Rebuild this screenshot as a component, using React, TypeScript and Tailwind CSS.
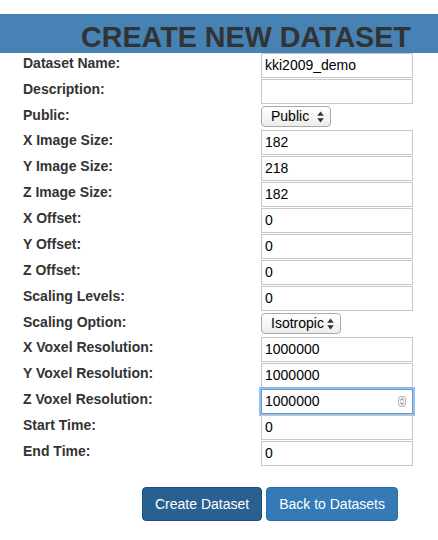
import React from "react";

type Row =
  | { label: string; kind: "input"; value: string; focused?: boolean }
  | { label: string; kind: "select"; value: string; width: number };

const rows: Row[] = [
  { label: "Dataset Name:", kind: "input", value: "kki2009_demo" },
  { label: "Description:", kind: "input", value: "" },
  { label: "Public:", kind: "select", value: "Public", width: 70 },
  { label: "X Image Size:", kind: "input", value: "182" },
  { label: "Y Image Size:", kind: "input", value: "218" },
  { label: "Z Image Size:", kind: "input", value: "182" },
  { label: "X Offset:", kind: "input", value: "0" },
  { label: "Y Offset:", kind: "input", value: "0" },
  { label: "Z Offset:", kind: "input", value: "0" },
  { label: "Scaling Levels:", kind: "input", value: "0" },
  { label: "Scaling Option:", kind: "select", value: "Isotropic", width: 80 },
  { label: "X Voxel Resolution:", kind: "input", value: "1000000" },
  { label: "Y Voxel Resolution:", kind: "input", value: "1000000" },
  { label: "Z Voxel Resolution:", kind: "input", value: "1000000", focused: true },
  { label: "Start Time:", kind: "input", value: "0" },
  { label: "End Time:", kind: "input", value: "0" },
];

function SelectArrows() {
  return (
    <svg width="7" height="12" viewBox="0 0 7 12" className="shrink-0">
      <path d="M3.5 0.5 L6.8 4.8 L0.2 4.8 Z" fill="#333" />
      <path d="M3.5 11.5 L6.8 7.2 L0.2 7.2 Z" fill="#333" />
    </svg>
  );
}

function Spinner() {
  return (
    <div className="absolute right-[6px] top-[6px] flex h-[11px] w-[8px] flex-col items-center justify-center gap-[1px] rounded-[3px] border border-[#b5b5b5] bg-[#f6f6f6]">
      <svg width="4" height="3" viewBox="0 0 4 3">
        <path d="M0.3 2.6 L2 0.5 L3.7 2.6" fill="none" stroke="#555" strokeWidth="0.8" />
      </svg>
      <svg width="4" height="3" viewBox="0 0 4 3">
        <path d="M0.3 0.4 L2 2.5 L3.7 0.4" fill="none" stroke="#555" strokeWidth="0.8" />
      </svg>
    </div>
  );
}

export default function App() {
  return (
    <div
      className="min-h-[540px] w-[438px] bg-white text-[#333]"
      style={{ fontFamily: '"Liberation Sans", Arial, Helvetica, sans-serif' }}
    >
      <div className="mt-[14px] h-[39px] bg-[#4682b4] pl-[81px] pt-[7px]">
        <h1 className="whitespace-nowrap text-[28.7px] font-bold leading-[32px] text-[#333]">
          CREATE NEW DATASET
        </h1>
      </div>

      <div className="flex flex-col pl-[23px]">
        {rows.map((r) => (
          <div
            key={r.label}
            className={`flex items-start ${r.kind === "select" ? "h-[25px]" : "h-[26px]"}`}
          >
            <div className="w-[238px] text-[14px] font-bold leading-[20px] text-[#333]">
              {r.label}
            </div>
            {r.kind === "input" ? (
              <div
                className={`relative h-[25px] w-[152px] border bg-white px-[3px] text-[14px] leading-[23px] text-black ${
                  r.focused
                    ? "border-[#5b9dd9] shadow-[0_0_0_2px_rgba(120,170,225,0.75)]"
                    : "border-[#c8c8c8]"
                }`}
              >
                {r.value}
                {r.focused ? <Spinner /> : null}
              </div>
            ) : (
              <div
                className="mt-[1px] flex h-[21px] items-center justify-between rounded-[4px] border border-[#a9a9a9] bg-gradient-to-b from-[#ffffff] to-[#ececec] pl-[9px] pr-[6px] text-[14px] leading-[19px] text-black"
                style={{ width: r.width }}
              >
                <span>{r.value}</span>
                <SelectArrows />
              </div>
            )}
          </div>
        ))}
      </div>

      <div className="mt-[20px] flex gap-[4px] pl-[142px]">
        <button className="rounded-[4px] border border-[#204d74] bg-[#286090] px-[12px] py-[6px] text-[14px] leading-[20px] text-white">
          Create Dataset
        </button>
        <button className="rounded-[4px] border border-[#2e6da4] bg-[#337ab7] px-[12px] py-[6px] text-[14px] leading-[20px] text-white">
          Back to Datasets
        </button>
      </div>
    </div>
  );
}
